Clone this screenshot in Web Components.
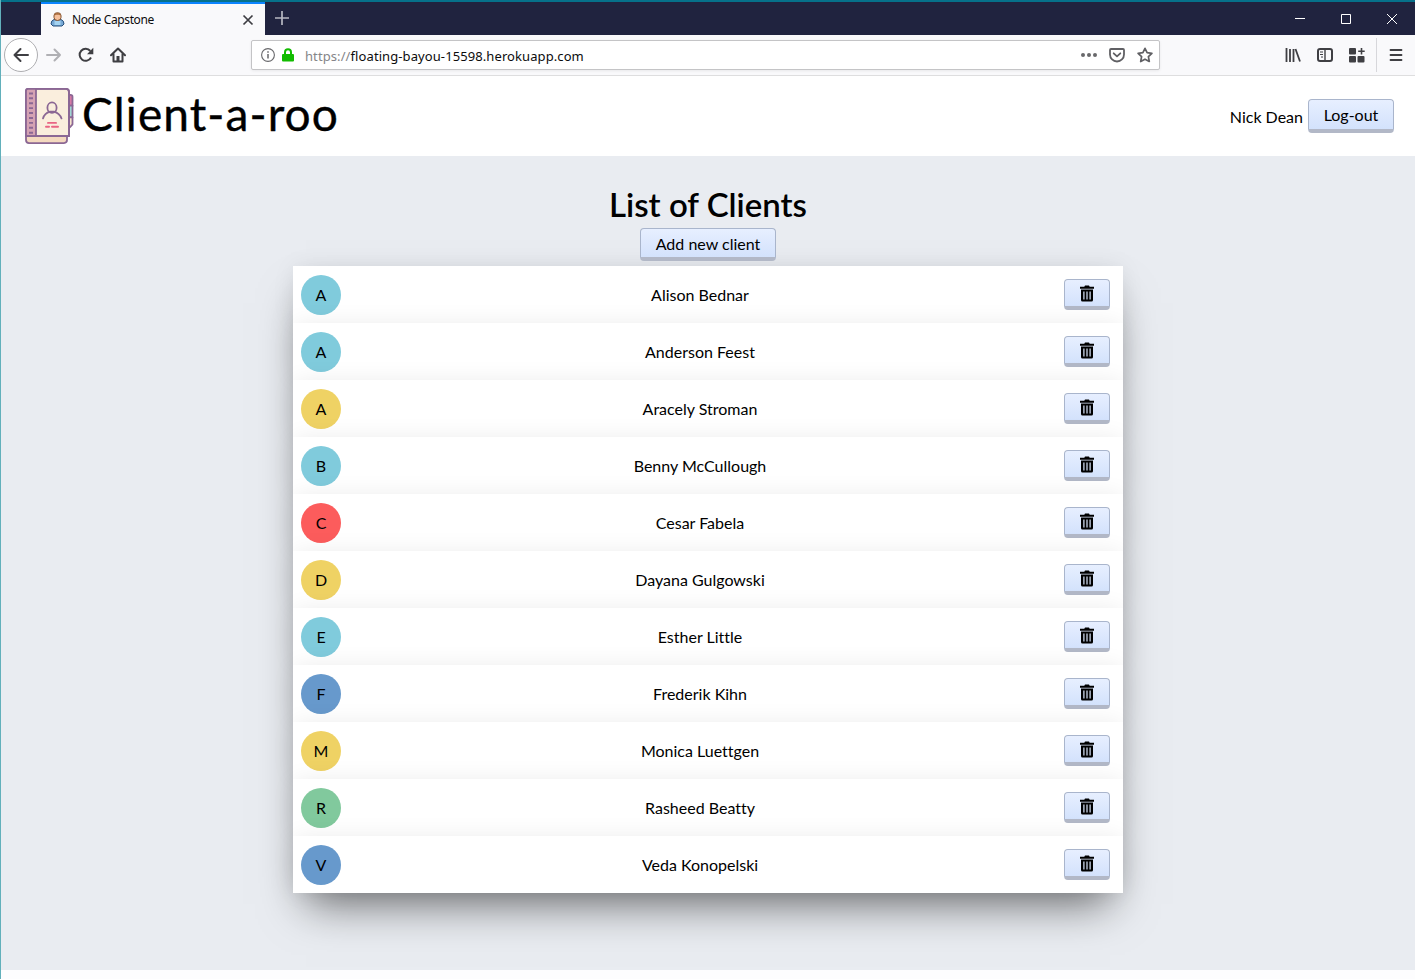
<!DOCTYPE html>
<html lang="en">
<head>
<meta charset="utf-8">
<title>Node Capstone</title>
<style>
html,body{margin:0;height:100%;overflow:hidden}
body{font:16px/20px Lato,"Liberation Sans",sans-serif;font-variant-ligatures:none;color:#000;background:#fdfdfe}
</style>
</head>
<body>
<app-window>
  <browser-tabs slot="tabs"></browser-tabs>
  <browser-toolbar slot="toolbar"></browser-toolbar>
  <site-header slot="header" user="Nick Dean"></site-header>
  <client-list></client-list>
</app-window>
<script>
const define = (name, html, setup) => {
  const tpl = document.createElement('template');
  tpl.innerHTML = html;
  customElements.define(name, class extends HTMLElement {
    constructor() {
      super();
      this.attachShadow({mode: 'open'}).append(tpl.content.cloneNode(true));
    }
    connectedCallback() { if (setup) setup(this, this.shadowRoot); }
  });
};

define('app-window', `<style>
:host{display:flex;flex-direction:column;box-sizing:border-box;width:1415px;height:979px;border-left:1px solid #62b0bb;overflow:hidden}
</style><slot name="tabs"></slot><slot name="toolbar"></slot><slot name="header"></slot><slot></slot>`);

define('browser-tabs', `<style>
:host{display:flex;height:35px;box-sizing:border-box;border-top:2px solid #06718a;background:#20233f;font:12px/16px "Noto Sans","Open Sans",sans-serif;color:#0c0c0d}
.tab{display:flex;align-items:center;box-sizing:border-box;width:224px;height:33px;margin-left:40px;padding:0 11px 0 9px;background:#f9f9fb;border-top:2px solid #0a84ff}
.tab span{flex:1;margin-left:7px;letter-spacing:-.38px}
svg{display:block;flex:none}
.plus{margin:9px 0 0 10px}
.win{display:flex;margin:9px 15px 0 auto;gap:30px}
</style>
<div class="tab">
<svg width="15" height="15" viewBox="0 0 15 15"><path d="M1 12q0-3.500 3-4.500h7q3 1 3 4.500l-2 2H3z" fill="#78a9d6" stroke="#244f7b"/><path d="M4.500 9h6v4h-6z" fill="#a4d4f2"/><path d="M4 3.500Q4 .7 7.500.7T11 3.500v2Q11 8.500 7.500 8.500T4 5.500z" fill="#f5c09c" stroke="#80502e"/><path d="M4.300 3.800Q4 1 7.500 1t3.200 2.800L9 2.800H6z" fill="#a86c3d"/></svg>
<span>Node Capstone</span>
<svg width="12" height="12" viewBox="0 0 12 12"><path d="M1.500 1.500l9 9m0-9l-9 9" stroke="#3d3d42" stroke-width="1.700"/></svg>
</div>
<svg class="plus" width="14" height="14" viewBox="0 0 14 14"><path d="M7 0v14M0 7h14" stroke="#b7b8c2" stroke-width="1.700"/></svg>
<div class="win">
<svg width="16" height="16"><path d="M3 7.500h10" stroke="#fff"/></svg>
<svg width="16" height="16"><path d="M3.500 3.500h9v9h-9z" fill="none" stroke="#fff"/></svg>
<svg width="16" height="16"><path d="M3 3l10 10m0-10L3 13" stroke="#fff"/></svg>
</div>`);

define('browser-toolbar', `<style>
:host{display:flex;align-items:center;height:41px;box-sizing:border-box;border-bottom:1px solid #dededf;background:#f9f9fb;font:13px/18px "Noto Sans","Open Sans",sans-serif}
svg{display:block;flex:none;fill:none;stroke:#3f3f43;stroke-width:2}
.back{box-sizing:border-box;display:grid;place-items:center;width:34px;height:34px;margin:0 8px 0 3px;border:1px solid #aeaeb1;border-radius:50%;background:#fff}
.nav{display:flex;gap:16px}
.url{box-sizing:border-box;display:flex;align-items:center;width:909px;height:30px;margin:0 0 0 125px;padding:0 6px 0 9px;border:1px solid #c4c4c6;border-radius:2px;background:#fff;box-shadow:0 1px 3px #0001;color:#0c0c0d}
.addr{flex:1;margin:2px 0 0 11px;letter-spacing:.09px}
.addr i{font-style:normal;color:#858588}
.tools{display:flex;margin-left:125px;gap:16px}
.menu{box-sizing:border-box;height:34px;margin-left:11px;padding:9px 0 0 11px;border-left:1px solid #d7d7db}
</style>
<div class="back"><svg width="18" height="18" viewBox="0 0 18 18"><path d="M16 9H2.500M8.500 3L2.500 9l6 6" stroke-linecap="round" stroke-linejoin="round"/></svg></div>
<div class="nav">
<svg width="16" height="16" viewBox="0 0 16 16" style="stroke:#b0b0b4"><path d="M1 8h13M8.500 2.500L14 8l-5.500 5.500" stroke-linecap="round" stroke-linejoin="round"/></svg>
<svg width="16" height="16" viewBox="0 0 16 16"><path d="M13 10.500A6 6 0 1 1 12.300 4"/><path d="M15.300.800v6.400H9z" fill="#3f3f43" stroke="none"/></svg>
<svg width="16" height="16" viewBox="0 0 16 16"><path d="M1 8.300L8 1.500l7 6.800M3.500 7v7.500h9V7" stroke-linecap="round" stroke-linejoin="round"/><path d="M6.500 15V9h3v6z" fill="#3f3f43" stroke="none"/></svg>
</div>
<div class="url">
<svg width="14" height="14" viewBox="0 0 14 14" style="stroke:#68686b;stroke-width:1.100"><circle cx="7" cy="7" r="6.400"/><path d="M7 6v4.500M7 3.200v1.500" stroke-width="1.500"/></svg>
<svg width="12" height="14" viewBox="0 0 12 14" style="margin-left:7px;stroke:#12bc00"><path d="M3 7V4.200a3 3 0 0 1 6 0V7"/><rect y="6" width="12" height="7.500" rx="1" fill="#12bc00" stroke="none"/></svg>
<div class="addr"><i>https://</i>floating-bayou-15598.herokuapp.com</div>
<svg width="16" height="16" viewBox="0 0 16 16" style="fill:#68686b;stroke:none"><circle cx="2" cy="8" r="2"/><circle cx="8" cy="8" r="2"/><circle cx="14" cy="8" r="2"/></svg>
<svg width="16" height="16" viewBox="0 0 16 16" style="margin-left:12px;stroke:#606064"><path d="M2 2h12q1 0 1 1v4.500a7 7 0 0 1-14 0V3q0-1 1-1zM4.700 6.300L8 9.400l3.300-3.100" stroke-linecap="round" stroke-linejoin="round" stroke-width="1.800"/></svg>
<svg width="16" height="16" viewBox="0 0 16 16" style="margin-left:12px;stroke:#606064"><path d="M8 1.300l2.100 4.400 4.800.6-3.500 3.300.9 4.900L8 12.200l-4.300 2.300.9-4.900L1.100 6.300l4.800-.6z" stroke-linejoin="round" stroke-width="1.700"/></svg>
</div>
<div class="tools">
<svg width="16" height="16" viewBox="0 0 16 16"><path d="M1.500 1v14M5 2v13M8.500 2v13M10.500 2l4.500 12.500" stroke-width="1.800"/></svg>
<svg width="16" height="16" viewBox="0 0 16 16"><rect x="1" y="2" width="14" height="12" rx="2"/><path d="M8 2v12" stroke-width="1.400"/><path d="M3 5h3M3 7.500h3M4 10h2" stroke-width="1"/></svg>
<svg width="16" height="16" viewBox="0 0 16 16"><g fill="#3f3f43" stroke="none"><rect x="0" y="1" width="7" height="6.500" rx="1"/><rect x="0" y="9" width="7" height="6.500" rx="1"/><rect x="8.500" y="9" width="7" height="6.500" rx="1"/></g><path d="M12.500 1v6.500M9.200 4.200h6.500" stroke-width="1.600"/></svg>
</div>
<div class="menu"><svg width="16" height="16" viewBox="0 0 16 16"><path d="M2.500 3h11M2.500 8h11M2.500 13h11" stroke-linecap="round" stroke-width="1.800"/></svg></div>`);

define('push-button', `<style>
:host{display:inline-flex;box-sizing:border-box;align-items:center;justify-content:center;height:34px;padding:0 15px;border:1px solid #a9b5cc;border-bottom:4px solid #b2b8c7;border-radius:4px;background:linear-gradient(#e7efff,#d3e2fc);background-clip:padding-box}
</style><slot></slot>`);

define('site-header', `<style>
:host{display:flex;align-items:center;box-sizing:border-box;height:80px;padding:0 21px 0 24px;background:#fff}
svg{display:block}
h1{margin:-5px 0 0 8px;font:46px/60px Lato,sans-serif;letter-spacing:1.1px;-webkit-text-stroke:.4px #000;white-space:nowrap}
.user{margin:2px 5px 0 auto}
push-button{width:86px;padding:0}
</style>
<svg width="49" height="56" viewBox="0 0 49 57" preserveAspectRatio="none" fill="none" stroke="#8b6794" stroke-width="1.800" stroke-linejoin="round">
<path d="M42 7h3.500q2 0 2 2v9H42z" fill="#d779a5"/><path d="M42 18h5.500v12H42z" fill="#a0d6d3"/><path d="M42 30h5.500v7l-2.500 3h-3z" fill="#f7e4cd"/>
<path d="M3 1h38q3 0 3 3v45H1V3q0-2 2-2z" fill="#faeedd"/><path d="M1 49V3q0-2 2-2h8v48z" fill="#d5a2b3" stroke="none"/><path d="M11 1v48"/><path d="M3 1h38q3 0 3 3v45H1V3q0-2 2-2z"/>
<path d="M1 49h41v4q0 3-3 3H4q-3 0-3-3z" fill="#f4d9bf"/>
<path d="M4 5.500h4M4 10.500h4M4 15.500h4M4 20.500h4M4 25.500h4M4 30.500h4M4 35.500h4M4 40.500h4M4 45.500h4" stroke-width="2"/>
<ellipse cx="27" cy="20" rx="4.600" ry="5.300"/><path d="M18 31q1.500-5.500 7-7h4q5.500 1.500 7.500 7" stroke-linecap="round"/>
<path d="M23 35.500h8M21 39.500h3M27 39.500h6" stroke="#e96584" stroke-width="2" stroke-linecap="round"/></svg>
<h1>Client-a-roo</h1><span class="user"></span><push-button>Log-out</push-button>`,
(el, root) => { root.querySelector('.user').textContent = el.getAttribute('user'); });

define('client-row', `<style>
:host{display:flex;align-items:center;position:relative;box-sizing:border-box;height:57px;padding:1px 13px 0 8px;background:#fff;box-shadow:0 0 25px -2px rgba(0,0,0,.085)}
.avatar{display:grid;place-items:center;width:40px;height:40px;border-radius:50%;background:var(--tone)}
.name{flex:1;text-align:center;padding-right:5px}
push-button{width:46px;height:31px;padding:0;margin-bottom:1px}
svg{display:block}
</style>
<div class="avatar"></div><div class="name"><slot></slot></div>
<push-button><svg width="14" height="17" viewBox="0 0 14 17"><path d="M0 1.700h4.300L5 .6h4l.700 1.100H14v2H0z"/><path fill-rule="evenodd" d="M1 4.500h12V15q0 1.500-1.500 1.500h-9Q1 16.500 1 15zM3.300 6.500v8h1.200v-8zm3.100 0v8h1.200v-8zm3.100 0v8h1.200v-8z"/></svg></push-button>`,
(el, root) => { root.querySelector('.avatar').textContent = el.textContent[0]; });

define('client-list', `<style>
:host{display:flex;flex-direction:column;align-items:center;height:814px;box-sizing:border-box;padding-top:28px;background:#e9ecf1;overflow:hidden}
h2{margin:0;font:600 33px/40px Lato,sans-serif}
push-button{box-sizing:border-box;width:136px;margin:4px 0 5px;height:33px;padding:1px 0 0;position:relative;z-index:1}
.list{width:830px;position:relative;box-shadow:0 24px 42px -13px rgba(0,0,0,.54)}
</style>
<h2>List of Clients</h2><push-button>Add new client</push-button><div class="list"></div>`,
(el, root) => {
  const teal = '#80cbdc', gold = '#efd264', red = '#fc5c5c', blue = '#6799cc', green = '#81c99d';
  const clients = [['Alison Bednar', teal], ['Anderson Feest', teal], ['Aracely Stroman', gold], ['Benny McCullough', teal],
    ['Cesar Fabela', red], ['Dayana Gulgowski', gold], ['Esther Little', teal], ['Frederik Kihn', blue],
    ['Monica Luettgen', gold], ['Rasheed Beatty', green], ['Veda Konopelski', blue]];
  root.querySelector('.list').append(...clients.map(([name, tone]) => {
    const row = document.createElement('client-row');
    row.textContent = name;
    row.style.setProperty('--tone', tone);
    return row;
  }));
});
</script>
</body>
</html>
